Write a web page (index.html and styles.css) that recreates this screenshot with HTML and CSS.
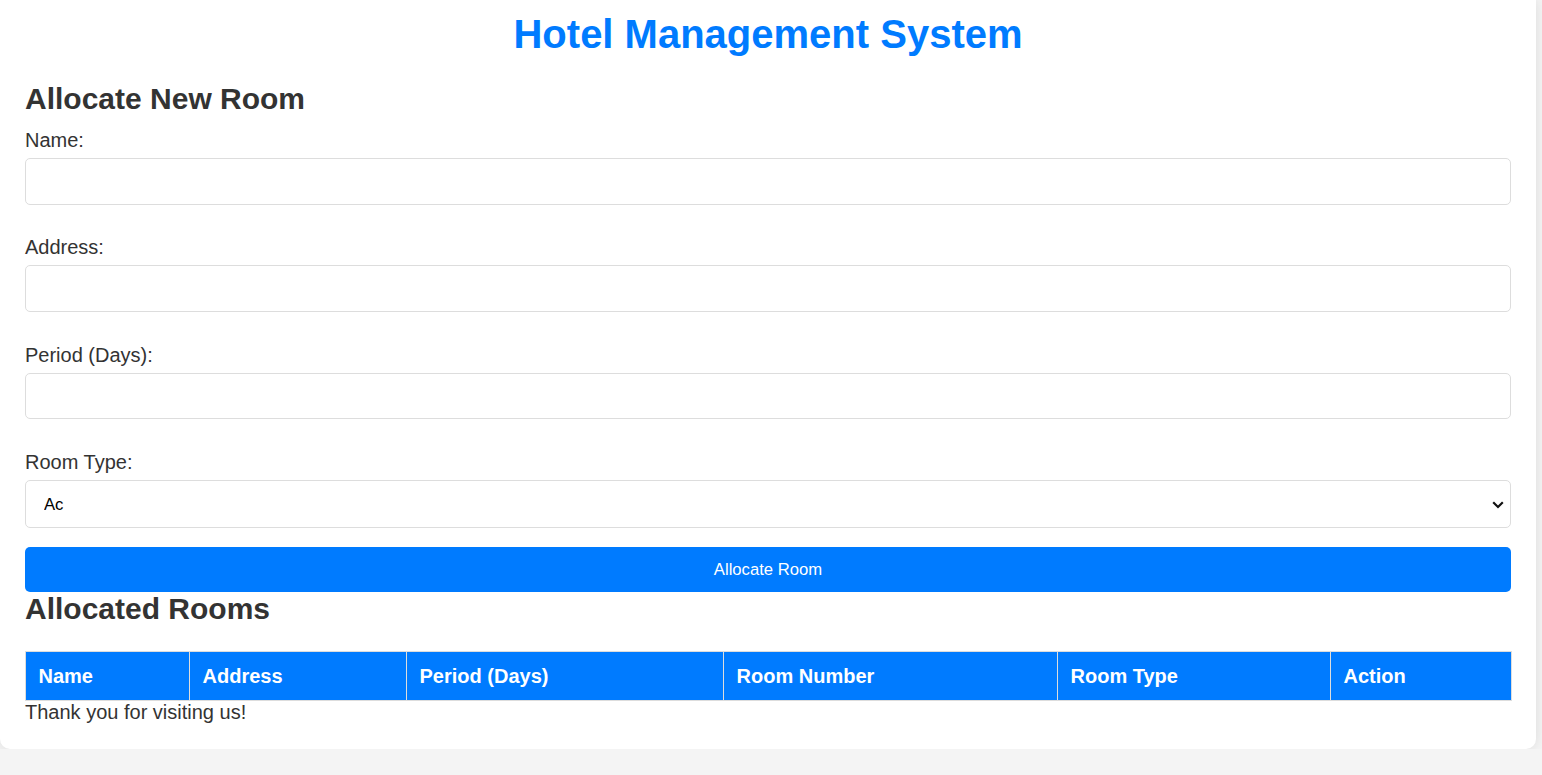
FILE: index.html
```html
<!DOCTYPE html>
<html lang="en">
<head>
<meta charset="utf-8">
<title>Hotel Management System</title>
<link rel="stylesheet" href="styles.css">
</head>
<body>
<div class="container">
  <h1 class="page-title">Hotel Management System</h1>
  <h2 class="section-title">Allocate New Room</h2>
  <form class="alloc-form">
    <label class="field-label" for="name">Name:</label>
    <input class="field-input" type="text" id="name">
    <label class="field-label" for="address">Address:</label>
    <input class="field-input" type="text" id="address">
    <label class="field-label" for="period">Period (Days):</label>
    <input class="field-input" type="number" id="period">
    <label class="field-label" for="type">Room Type:</label>
    <div class="select-wrap">
      <select class="field-select" id="type">
        <option>Ac</option>
        <option>Non-Ac</option>
      </select>
      <svg class="select-arrow" width="12" height="8" viewBox="0 0 12 8" aria-hidden="true"><path d="M1.2 1.3 L6 6 L10.8 1.3" fill="none" stroke="#111" stroke-width="2.2"/></svg>
    </div>
    <button type="button" class="submit-btn">Allocate Room</button>
  </form>
  <h2 class="section-title">Allocated Rooms</h2>
  <table class="rooms-table">
    <colgroup>
      <col class="c-name"><col class="c-address"><col class="c-period"><col class="c-number"><col class="c-type"><col class="c-action">
    </colgroup>
    <thead>
      <tr>
        <th>Name</th>
        <th>Address</th>
        <th>Period (Days)</th>
        <th>Room Number</th>
        <th>Room Type</th>
        <th>Action</th>
      </tr>
    </thead>
    <tbody></tbody>
  </table>
  <p class="footer-note">Thank you for visiting us!</p>
</div>
</body>
</html>
```
FILE: styles.css
```css
html, body {
  margin: 0;
  padding: 0;
}
body {
  background: #f4f4f4;
  font-family: "Liberation Sans", Arial, sans-serif;
  font-size: 20px;
  color: #333;
}
.container {
  width: 1536px;
  box-sizing: border-box;
  background: #fff;
  padding: 12px 25px 25px;
  border-radius: 0 0 10px 10px;
  box-shadow: 0 0 12.5px rgba(0, 0, 0, 0.1);
}
.page-title {
  margin: 0 0 25.3px;
  font-size: 40px;
  line-height: 44.7px;
  text-align: center;
  color: #007bff;
  font-weight: bold;
}
.section-title {
  margin: 0 0 13.5px;
  font-size: 30px;
  line-height: 33.5px;
  font-weight: bold;
  color: #333;
}
.alloc-form {
  display: flex;
  flex-direction: column;
}
.field-label {
  display: block;
  line-height: 23px;
  margin-bottom: 6px;
}
.field-input {
  box-sizing: border-box;
  width: 100%;
  height: 46.5px;
  margin: 0 0 31.9px;
  padding: 12.5px;
  border: 1px solid #ddd;
  border-radius: 5px;
  font-family: "Liberation Sans", Arial, sans-serif;
  font-size: 16.67px;
  background: #fff;
}
.select-wrap {
  position: relative;
  margin: 0 0 19px;
}
.field-select {
  -webkit-appearance: none;
  appearance: none;
  box-sizing: border-box;
  display: block;
  width: 100%;
  height: 47.5px;
  margin: 0;
  padding: 1px 30px 0 18px;
  border: 1px solid #ddd;
  border-radius: 5px;
  font-family: "Liberation Sans", Arial, sans-serif;
  font-size: 16.67px;
  color: #000;
  background: #fff;
}
.select-arrow {
  position: absolute;
  right: 7px;
  top: 20.5px;
  pointer-events: none;
}
.submit-btn {
  box-sizing: border-box;
  width: 100%;
  height: 45px;
  padding: 1px 0 0;
  border: none;
  border-radius: 5px;
  background: #007bff;
  color: #fff;
  font-family: "Liberation Sans", Arial, sans-serif;
  font-size: 16.67px;
}
.rooms-table {
  width: 100%;
  margin-top: 25.5px;
  border-collapse: collapse;
  table-layout: fixed;
}
.c-name { width: 164px; }
.c-address { width: 217px; }
.c-period { width: 317px; }
.c-number { width: 334px; }
.c-type { width: 273px; }
.c-action { width: 181px; }
.rooms-table th {
  background: #007bff;
  color: #fff;
  text-align: left;
  font-weight: bold;
  font-size: 20px;
  line-height: 23px;
  padding: 13px 12.5px 12px;
  border: 1px solid #ddd;
}
.footer-note {
  margin: 0;
  line-height: 23px;
}
```
